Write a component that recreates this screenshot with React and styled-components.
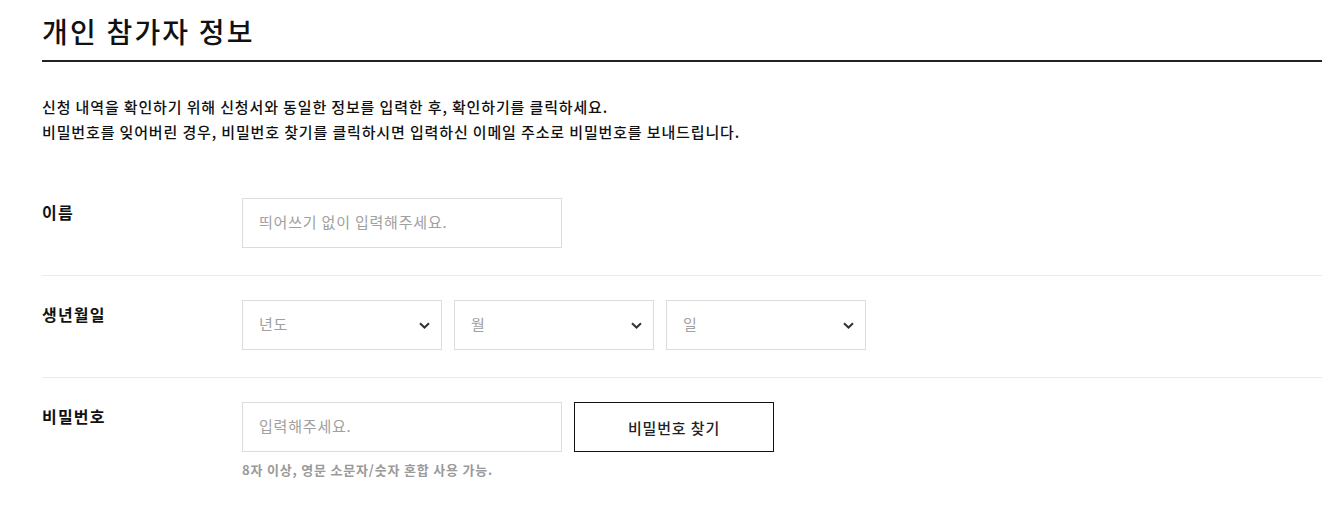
import React from "react";
import styled, { createGlobalStyle } from "styled-components";

const Global = createGlobalStyle`
  html, body { margin: 0; padding: 0; background: #fff; }
  body { font-family: "Noto Sans CJK KR", "Noto Sans", sans-serif; color: #111; }
  * { box-sizing: border-box; }
`;

const Page = styled.div`
  width: 1280px;
  margin-left: 42px;
  padding-top: 11px;
`;

const Title = styled.h2`
  margin: 0;
  font-size: 28px;
  font-weight: 500;
  line-height: 40px;
  letter-spacing: 2.2px;
  color: #111;
  padding-bottom: 9px;
  border-bottom: 2px solid #222;
`;

const Desc = styled.p`
  margin: 32px 0 30px;
  font-size: 15px;
  font-weight: 500;
  line-height: 25px;
  letter-spacing: 0.86px;
  color: #111;
`;

const Row = styled.div`
  display: flex;
  align-items: flex-start;
  padding: 24px 0 27px;
  border-bottom: 1px solid ${(p) => (p.$last ? "transparent" : "#ebebeb")};
`;

const Label = styled.div`
  width: 200px;
  flex: none;
  padding-top: 2px;
  font-size: 16px;
  font-weight: 700;
  line-height: 24px;
  letter-spacing: 1.2px;
  color: #111;
`;

const Field = styled.div`
  display: flex;
  flex-direction: column;
`;

const Controls = styled.div`
  display: flex;
  gap: 12px;
`;

const TextInput = styled.input`
  width: 320px;
  height: 50px;
  border: 1px solid #dcdcdc;
  padding: 0 16px 3px;
  font-family: "Noto Sans CJK KR", "Noto Sans", sans-serif;
  font-size: 15px;
  letter-spacing: 0.8px;
  color: #111;
  outline: none;
  background: #fff;
  &::placeholder { color: #a0a0a0; }
`;

const SelectBox = styled.div`
  width: 200px;
  height: 50px;
  border: 1px solid #dcdcdc;
  padding: 0 11px 3px 16px;
  display: flex;
  align-items: center;
  justify-content: space-between;
  font-size: 15px;
  letter-spacing: 0.8px;
  color: #a0a0a0;
  background: #fff;
  svg { margin-top: 3px; }
`;

const Button = styled.button`
  width: 200px;
  height: 50px;
  border: 1px solid #111;
  background: #fff;
  font-family: "Noto Sans CJK KR", "Noto Sans", sans-serif;
  font-size: 15px;
  font-weight: 500;
  letter-spacing: 0.85px;
  color: #222;
  cursor: pointer;
`;

const Help = styled.div`
  margin-top: 8px;
  font-size: 13px;
  font-weight: 700;
  line-height: 20px;
  letter-spacing: 0.8px;
  color: #9a9a9a;
`;

const Chevron = () => (
  <svg width="11" height="7" viewBox="0 0 11 7" fill="none">
    <path d="M1 1.2 L5.5 5.5 L10 1.2" stroke="#333" strokeWidth="2" strokeLinejoin="miter" />
  </svg>
);

const Select = ({ label }) => (
  <SelectBox>
    <span>{label}</span>
    <Chevron />
  </SelectBox>
);

export default function App() {
  return (
    <>
      <Global />
      <Page>
        <Title>개인 참가자 정보</Title>
        <Desc>
          신청 내역을 확인하기 위해 신청서와 동일한 정보를 입력한 후, 확인하기를 클릭하세요.
          <br />
          비밀번호를 잊어버린 경우, 비밀번호 찾기를 클릭하시면 입력하신 이메일 주소로 비밀번호를 보내드립니다.
        </Desc>
        <Row>
          <Label>이름</Label>
          <Field>
            <TextInput placeholder="띄어쓰기 없이 입력해주세요." />
          </Field>
        </Row>
        <Row>
          <Label>생년월일</Label>
          <Controls>
            <Select label="년도" />
            <Select label="월" />
            <Select label="일" />
          </Controls>
        </Row>
        <Row $last>
          <Label>비밀번호</Label>
          <Field>
            <Controls>
              <TextInput type="password" placeholder="입력해주세요." />
              <Button>비밀번호 찾기</Button>
            </Controls>
            <Help>8자 이상, 영문 소문자/숫자 혼합 사용 가능.</Help>
          </Field>
        </Row>
      </Page>
    </>
  );
}
